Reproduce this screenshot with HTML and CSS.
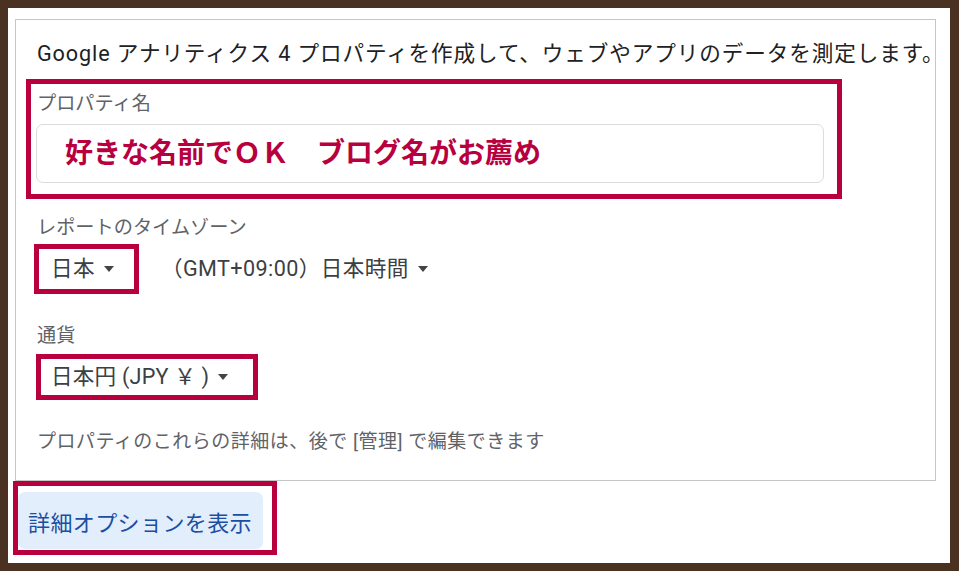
FILE: index.html
```html
<!DOCTYPE html>
<html lang="ja">
<head>
    <meta charset="UTF-8">
    <meta name="viewport" content="width=device-width, initial-scale=1.0">
    <title>プロパティの設定</title>
    <link rel="stylesheet" href="styles.css">
</head>
<body>
    <div class="frame">
        <div class="card">
            <p class="lead">Google アナリティクス 4 プロパティを作成して、ウェブやアプリのデータを測定します。</p>

            <div class="mark mark-name">
                <div class="label">プロパティ名</div>
                <div class="name-input">好きな名前でＯＫ　ブログ名がお薦め</div>
            </div>

            <div class="label label-zone">レポートのタイムゾーン</div>
            <div class="zone-row">
                <div class="mark mark-country">
                    <span class="select">日本 <span class="caret"></span></span>
                </div>
                <span class="select zone">（GMT+09:00）日本時間 <span class="caret"></span></span>
            </div>

            <div class="label label-currency">通貨</div>
            <div class="mark mark-currency">
                <span class="select currency">日本円 (JPY ￥ ) <span class="caret"></span></span>
            </div>

            <p class="note">プロパティのこれらの詳細は、後で [管理] で編集できます</p>
        </div>

        <div class="mark mark-more">
            <button class="more-btn">詳細オプションを表示</button>
        </div>
    </div>
</body>
</html>
```

FILE: styles.css
```css
* {
    margin: 0;
    padding: 0;
    box-sizing: border-box;
}

body {
    background: #4b3121;
    font-family: Roboto, "Noto Sans CJK JP", sans-serif;
    color: #202124;
}

.frame {
    margin: 8px 9px 8px 8px;
    height: 555px;
    background: #fff;
    padding: 11px 14px 0 7px;
}

.card {
    height: 462px;
    border: 1px solid #c6c6c6;
    padding-top: 19px;
}

.lead {
    font-size: 21.6px;
    line-height: 30px;
    letter-spacing: 0.9px;
    padding-left: 21px;
    white-space: nowrap;
    color: #202124;
}

/* red annotation frames */
.mark {
    border: 5px solid #b9003e;
}

.mark-name {
    margin: 10px 0 0 10px;
    width: 816px;
    height: 120px;
    padding: 8px 13px 11px 5px;
}

.label {
    font-size: 19.2px;
    line-height: 24px;
    color: #5f6368;
}

.mark-name .label {
    padding-left: 1px;
}

.name-input {
    margin-top: 8px;
    height: 59px;
    border: 1px solid #dcdcdc;
    border-radius: 7px;
    padding-left: 28px;
    font-size: 28px;
    font-weight: 700;
    line-height: 57px;
    color: #b8003f;
}

.label-zone {
    margin-top: 17px;
    padding-left: 21px;
}

.zone-row {
    display: flex;
    align-items: center;
    margin-top: 4px;
}

.select {
    display: inline-flex;
    align-items: center;
    font-size: 21.6px;
    line-height: 30px;
    letter-spacing: 0.4px;
    color: #3c4043;
    white-space: nowrap;
}

.caret {
    display: inline-block;
    margin-left: 9px;
    border-top: 6px solid #444;
    border-left: 5.5px solid transparent;
    border-right: 5.5px solid transparent;
}

.mark-country {
    margin-left: 18px;
    width: 105px;
    height: 50px;
    padding-left: 12px;
    display: flex;
    align-items: center;
}

.zone {
    margin-left: 22px;
}

.label-currency {
    margin-top: 30px;
    padding-left: 21px;
}

.mark-currency {
    margin: 6px 0 0 20px;
    width: 222px;
    height: 46px;
    padding-left: 10px;
    display: flex;
    align-items: center;
}

.currency {
    letter-spacing: 0.2px;
}

.note {
    margin-top: 29px;
    padding-left: 21px;
    font-size: 19px;
    line-height: 26px;
    letter-spacing: 0.5px;
    color: #5f6368;
}

.mark-more {
    margin-left: -2px;
    width: 264px;
    height: 74px;
    padding-top: 6px;
}

.more-btn {
    display: block;
    width: 245px;
    height: 57px;
    border: none;
    border-radius: 7px;
    background: #e3eefc;
    color: #1a4fa3;
    font-family: Roboto, "Noto Sans CJK JP", sans-serif;
    font-size: 22px;
    letter-spacing: 0.4px;
    text-align: left;
    padding-left: 10px;
    cursor: pointer;
}
```
